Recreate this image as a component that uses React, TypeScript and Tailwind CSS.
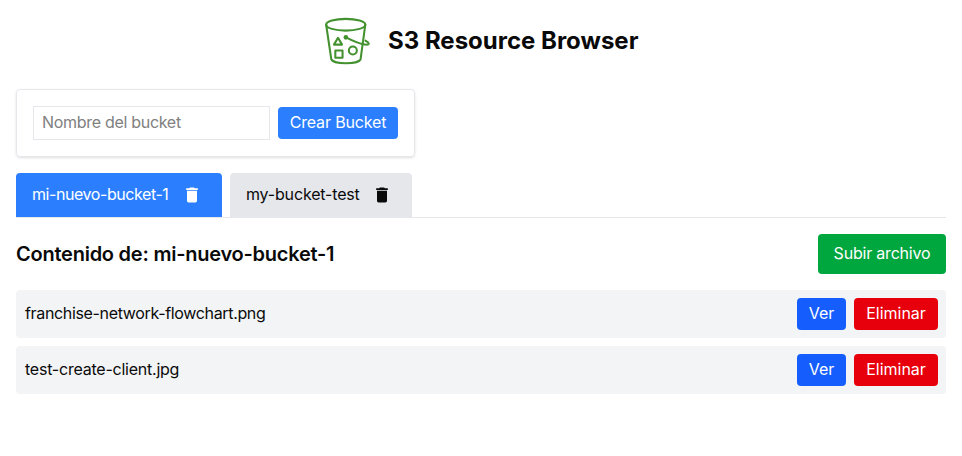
import { useState } from "react";
import { MdDelete } from "react-icons/md";

const buckets = [
  { name: "mi-nuevo-bucket-1", label: "w-[138px] tracking-[-0.43px]" },
  { name: "my-bucket-test", label: "w-[114px] tracking-[-0.17px]" },
];

const files = [
  { name: "franchise-network-flowchart.png", spacing: "tracking-[-0.34px]" },
  { name: "test-create-client.jpg", spacing: "tracking-[-0.23px]" },
];

function BucketLogo() {
  return (
    <svg width="48" height="48" viewBox="0.4 0.7 46.6 46.6" fill="none" stroke="#43922f" strokeWidth="2" strokeLinecap="round" strokeLinejoin="round">
      <ellipse cx="21.5" cy="8.2" rx="19" ry="5.7" />
      <path d="M2.5 8.2 7.5 41.9C8.3 44.2 15 45.6 21.7 45.6s13.4-1.4 14.2-3.7L40.5 8.2" />
      <path d="M21.7 20.5C28 23.8 35.5 27 41.5 27.6c3.4 .2 2.9-2.2-.8-3.9" />
      <circle cx="21.6" cy="20.4" r="1.3" fill="#43922f" />
      <path d="m14 20.9 3.9 6.6h-7.8Z" />
      <rect x="11.4" y="33.2" width="7" height="7" />
      <circle cx="28.4" cy="33.2" r="3.9" />
    </svg>
  );
}

export default function App() {
  const [active, setActive] = useState(0);
  return (
    <main className="min-h-screen bg-white p-4 font-['Inter','Liberation_Sans',sans-serif] text-base text-[#0a0a0a]">
      <header className="mb-6 flex h-[49px] items-center justify-center gap-4">
        <BucketLogo />
        <h1 className="w-[250px] whitespace-nowrap text-2xl font-bold tracking-normal">S3 Resource Browser</h1>
      </header>

      <section className="mb-4 flex h-[68px] w-[399px] items-center gap-2 rounded border border-gray-200 px-4 shadow-sm">
        <input placeholder="Nombre del bucket" className="h-[34px] w-[237px] border border-gray-200 px-2 pb-0.5 tracking-[-0.3px] placeholder:text-[#808080]" />
        <button className="h-8 w-[120px] whitespace-nowrap rounded bg-[#2b7fff] pb-0.5 tracking-[-0.15px] text-white">Crear Bucket</button>
      </section>

      <nav className="mb-4 flex gap-2 border-b border-gray-200">
        {buckets.map((bucket, i) => (
          <div
            key={bucket.name}
            onClick={() => setActive(i)}
            className={`flex h-11 items-center rounded-t px-4 ${i === active ? "bg-[#2b7fff] text-white" : "bg-gray-200"}`}
          >
            <span className={`whitespace-nowrap pb-0.5 ${bucket.label}`}>{bucket.name}</span>
            <button className="ml-2 p-1" aria-label="Eliminar bucket">
              <MdDelete size={20} />
            </button>
          </div>
        ))}
      </nav>

      <div className="mb-4 flex items-center justify-between">
        <h2 className="text-xl font-semibold tracking-[-0.24px]">Contenido de: {buckets[active].name}</h2>
        <button className="h-10 w-32 whitespace-nowrap rounded bg-[#00a63e] pb-0.5 tracking-[-0.2px] text-white">Subir archivo</button>
      </div>

      <ul className="space-y-2">
        {files.map((file) => (
          <li key={file.name} className="flex h-12 items-center gap-2 rounded bg-gray-100 px-2">
            <span className={`flex-1 pb-0.5 pl-px ${file.spacing}`}>{file.name}</span>
            <button className="h-8 w-[49px] rounded bg-[#155dfc] pb-0.5 text-white">Ver</button>
            <button className="h-8 w-[84px] rounded bg-[#e7000b] pb-0.5 text-white">Eliminar</button>
          </li>
        ))}
      </ul>
    </main>
  );
}
